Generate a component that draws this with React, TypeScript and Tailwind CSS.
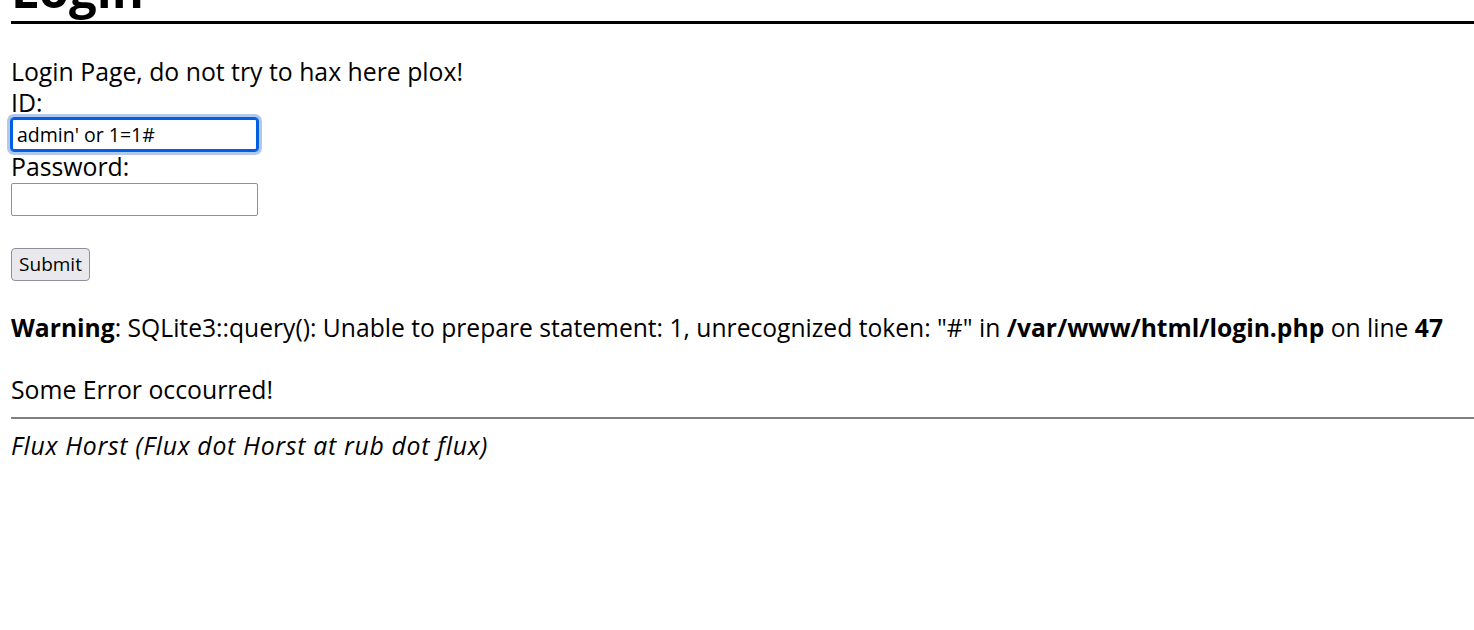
import React from "react";

const App: React.FC = () => {
  return (
    <div className="min-h-[630px] overflow-hidden bg-white pl-[11px] font-['Open_Sans','Noto_Sans',sans-serif] text-black">
      <h1 className="-mt-[35px] border-b-[3px] border-black pb-[8px] text-[49px] font-bold leading-[48px]">Login</h1>

      <div className="mt-[32px] flex flex-col text-[24.8px] leading-[31px]">
        <div className="h-[31px]">Login Page, do not try to hax here plox!</div>
        <div className="h-[31px]">ID:</div>
        <input
          type="text"
          defaultValue="admin' or 1=1#"
          className="h-[33px] w-[247px] rounded-[3px] border-2 border-[#0060df] bg-white px-[4px] text-[19.5px] text-black outline outline-1 outline-[#0060df] shadow-[0_0_0_4px_#b3c8ef]"
        />
        <div className="h-[32px]">Password:</div>
        <input
          type="password"
          className="h-[33px] w-[247px] rounded-[2px] border border-[#8f8f9d] bg-white px-[4px] text-[19px] outline-none"
        />
        <div className="h-[32px]" />
        <button
          type="button"
          className="h-[33px] w-[79px] rounded-[4px] border border-[#8f8f9d] bg-[#e9e9ed] text-[19px] leading-none"
        >
          Submit
        </button>
        <div className="h-[31px]" />
        <div className="h-[31px] whitespace-nowrap text-[24.65px]">
          <b>Warning</b>: SQLite3::query(): Unable to prepare statement: 1, unrecognized token: "#" in{" "}
          <b>/var/www/html/login.php</b> on line <b>47</b>
        </div>
        <div className="h-[31px]" />
        <div className="h-[31px]">Some Error occourred!</div>
      </div>

      <hr className="mt-[12px] border-t-2 border-[#808080]" />
      <div className="mt-[11px] text-[24.8px] italic leading-[31px] tracking-[0.7px]">Flux Horst (Flux dot Horst at rub dot flux)</div>
    </div>
  );
};

export default App;
